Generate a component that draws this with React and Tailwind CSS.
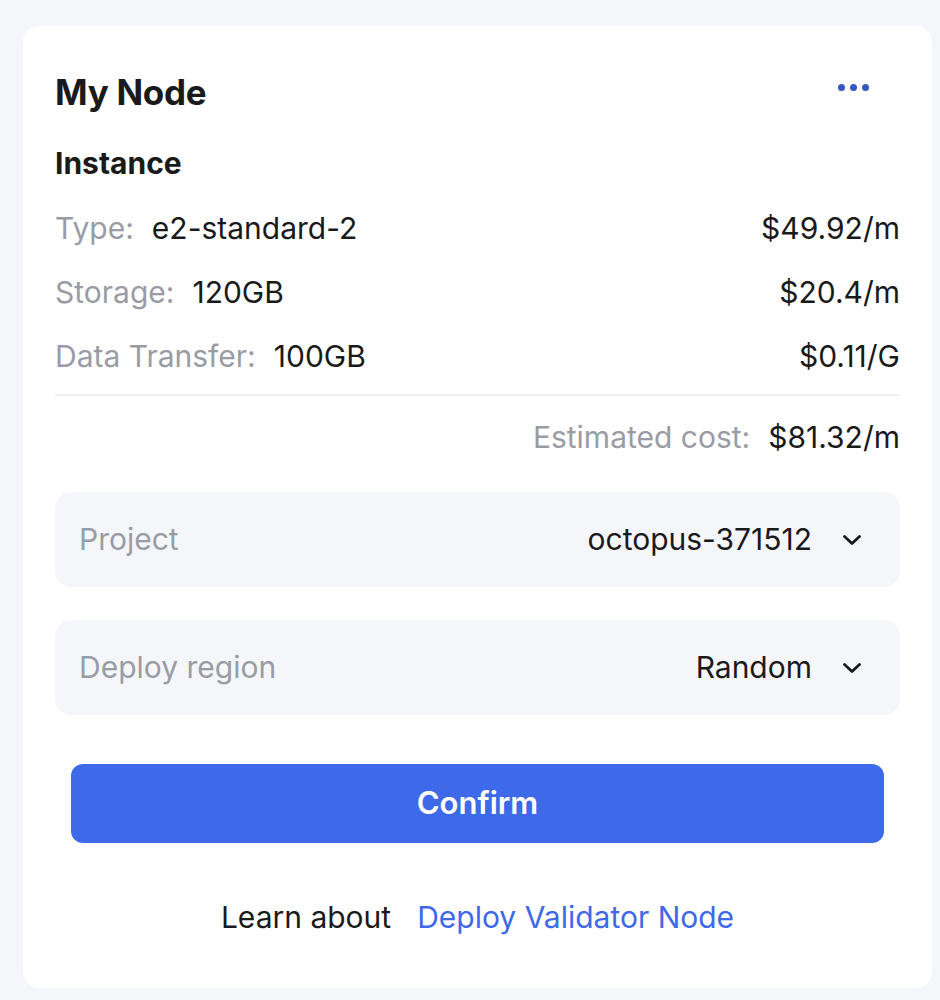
import React from 'react';

const rows = [
  { label: 'Type:', value: 'e2-standard-2', price: '$49.92/m' },
  { label: 'Storage:', value: '120GB', price: '$20.4/m' },
  { label: 'Data Transfer:', value: '100GB', price: '$0.11/G' },
];

function Chevron() {
  return (
    <svg width="20" height="12" viewBox="0 0 20 12" fill="none" stroke="#1a1a1a" strokeWidth="2.8" strokeLinecap="round" strokeLinejoin="round">
      <path d="M2.5 2.5L10 9.5l7.5-7" />
    </svg>
  );
}

function SelectBox({ label, value }) {
  return (
    <div className="flex items-center justify-between h-[95px] rounded-2xl bg-[#f5f6fa] pl-6 pr-[38px]">
      <span className="text-[30px] text-[#9a9ca5]">{label}</span>
      <div className="flex items-center gap-[30px]">
        <span className="text-[30px] text-[#1a1a1a]">{value}</span>
        <Chevron />
      </div>
    </div>
  );
}

export default function App() {
  return (
    <div className="min-h-screen bg-[#f5f6fa] pt-[26px] pl-[23px] pr-[8px] pb-3" style={{ fontFamily: 'Inter, "Noto Sans", sans-serif' }}>
      <div className="bg-white rounded-2xl px-8 pt-[44px] h-[962px]">
        <div className="flex items-center justify-between h-[44px] mb-[31px]">
          <h1 className="text-[35px] font-bold text-[#1a1a1a] tracking-[-0.3px]">My Node</h1>
          <div className="flex items-center gap-[5px] mr-[31px] mb-[10px]">
            <span className="w-[7px] h-[7px] rounded-full bg-[#3558c4]" />
            <span className="w-[7px] h-[7px] rounded-full bg-[#3558c4]" />
            <span className="w-[7px] h-[7px] rounded-full bg-[#3558c4]" />
          </div>
        </div>

        <h2 className="text-[30px] font-bold text-[#1a1a1a] leading-[36px] mb-[15px]">Instance</h2>

        <div className="flex flex-col">
          {rows.map((r) => (
            <div key={r.label} className="flex items-center justify-between h-[64px] text-[30px]">
              <div className="flex items-center gap-[18px]">
                <span className="text-[#9a9ca5]">{r.label}</span>
                <span className="text-[#1a1a1a]">{r.value}</span>
              </div>
              <span className="text-[#1a1a1a]">{r.price}</span>
            </div>
          ))}
        </div>

        <div className="border-t-2 border-[#eef0f4] mt-[6px]" />

        <div className="flex items-center justify-end gap-[18px] h-[82px] text-[30px]">
          <span className="text-[#9a9ca5]">Estimated cost:</span>
          <span className="text-[#1a1a1a]">$81.32/m</span>
        </div>

        <div className="flex flex-col gap-[33px] mt-[14px]">
          <SelectBox label="Project" value="octopus-371512" />
          <SelectBox label="Deploy region" value="Random" />
        </div>

        <div className="px-4 mt-[49px]">
          <button className="w-full h-[79px] rounded-xl bg-[#3e69e8] text-white text-[31px] font-semibold">
            Confirm
          </button>
        </div>

        <div className="flex items-center justify-center gap-[26px] mt-[56px] text-[30px] leading-[36px]">
          <span className="text-[#1a1a1a]">Learn about</span>
          <a className="text-[#3e69e8]">Deploy Validator Node</a>
        </div>
      </div>
    </div>
  );
}
